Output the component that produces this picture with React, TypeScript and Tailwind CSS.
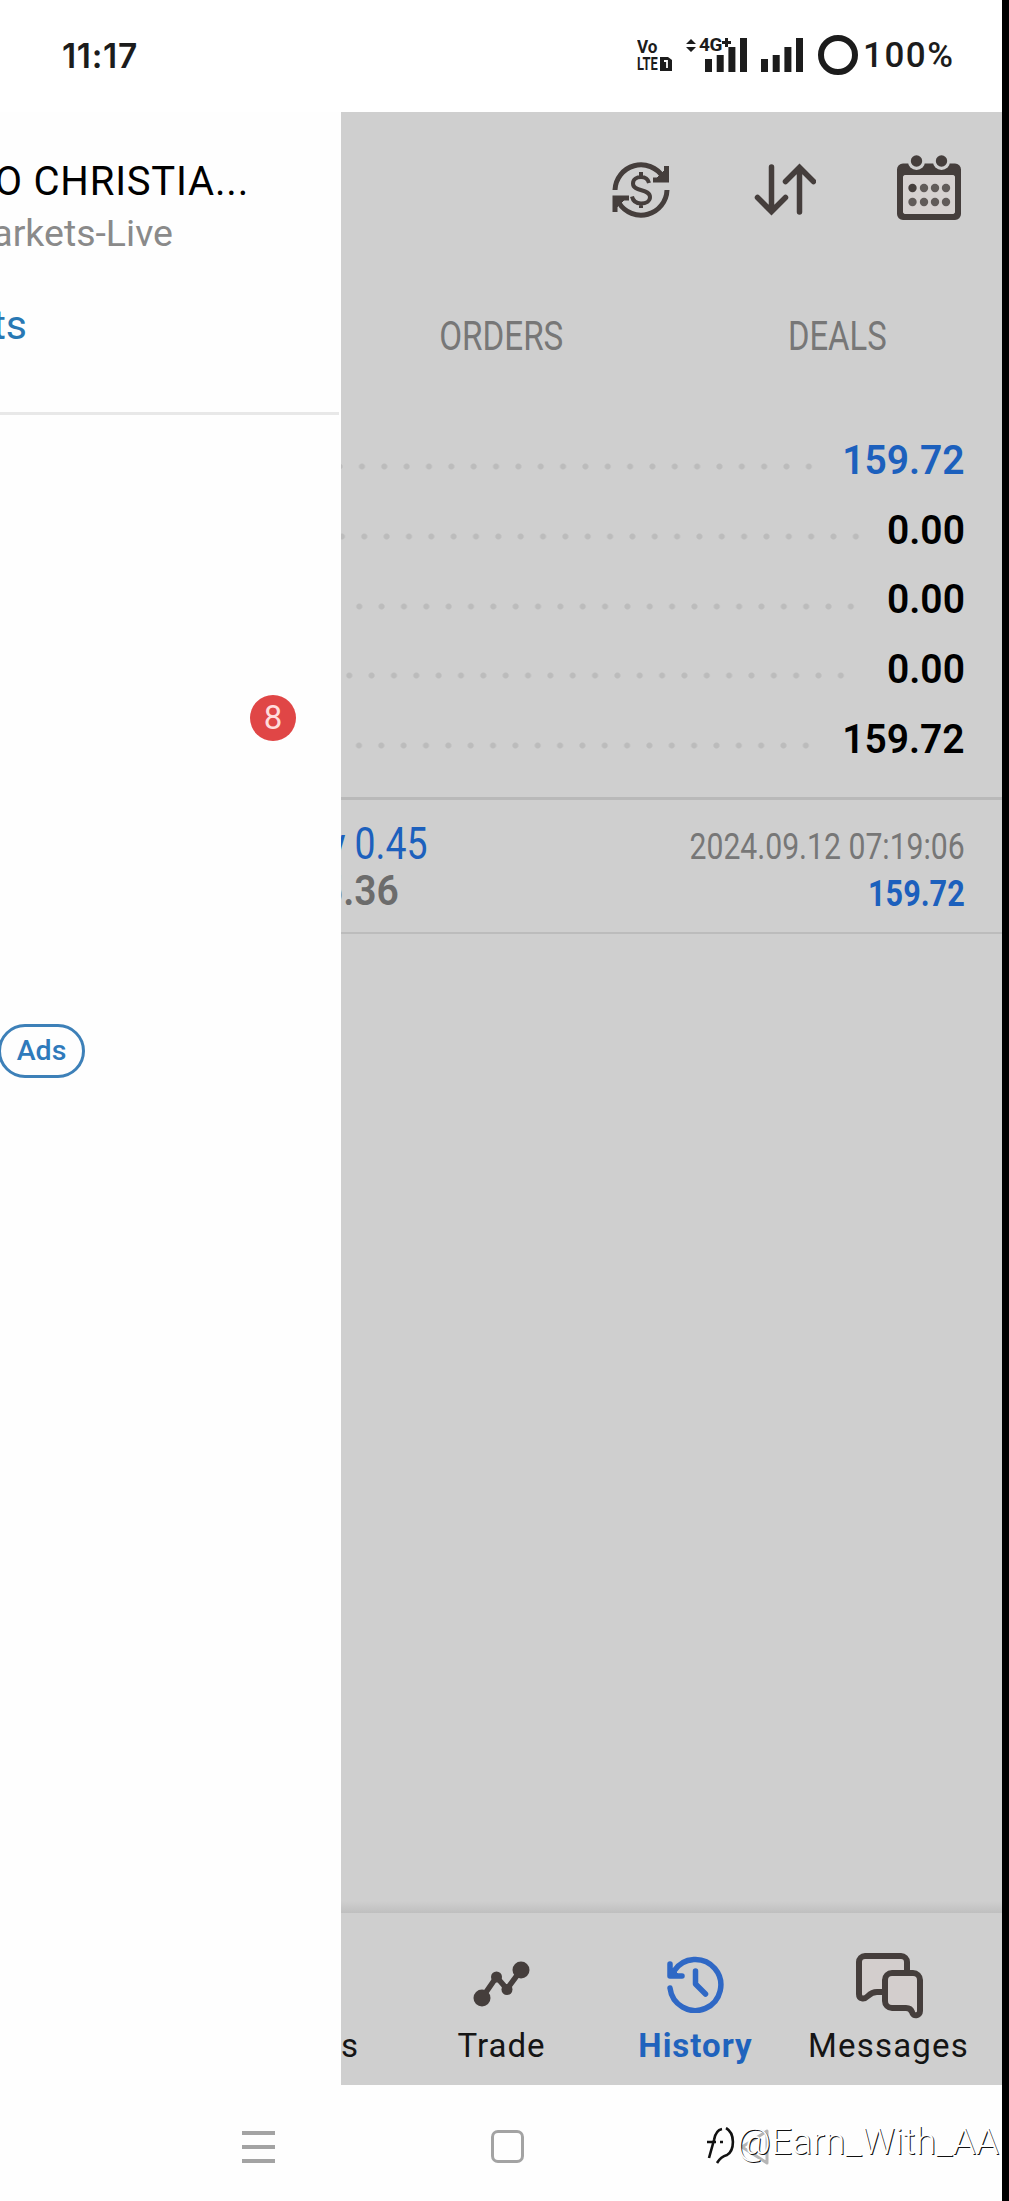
import clsx from 'clsx'

type SummaryRow = {
  value: string
  dots: string
  color: string
}

const summary: SummaryRow[] = [
  { value: '159.72', dots: 'w-[479px]', color: 'text-[#1c60bd]' },
  { value: '0.00', dots: 'w-[526px]', color: 'text-black' },
  { value: '0.00', dots: 'w-[521px]', color: 'text-black' },
  { value: '0.00', dots: 'w-[511px]', color: 'text-black' },
  { value: '159.72', dots: 'w-[476px]', color: 'text-black' },
]

function SignalBars() {
  return (
    <svg width="42" height="34" viewBox="0 0 42 34" fill="#1c1c1c">
      <rect x="0" y="21" width="7" height="13" />
      <rect x="11.7" y="17" width="7" height="17" />
      <rect x="23.4" y="9" width="7" height="25" />
      <rect x="35" y="0" width="7" height="34" />
    </svg>
  )
}

function StatusBar() {
  return (
    <header className="flex h-28 items-start bg-white text-[#1c1c1c]">
      <div className="mt-9 ml-[62px] w-[575px] shrink-0 font-[Inter] text-[33.5px] leading-10 font-semibold tracking-[.7px]">
        11:17
      </div>
      <div className="mt-[38px] w-[48px] shrink-0 font-[Roboto] text-[19px] leading-[17px] font-bold">
        <div className="origin-left scale-x-[.9]">Vo</div>
        <div className="flex items-center">
          <span className="w-[23px] origin-left scale-x-[.68]">LTE</span>
          <svg width="12" height="14" viewBox="0 0 12 14">
            <path d="M0 0h8l4 3v11H0z" fill="#1c1c1c" />
            <path d="M4 4h3v7" fill="none" stroke="#fff" strokeWidth="1.8" />
          </svg>
        </div>
      </div>
      <div className="relative mt-[38px] w-[76px] shrink-0 pl-5">
        <SignalBars />
        <div className="absolute top-0 left-0 flex items-start">
          <svg className="mt-px" width="12" height="13" viewBox="0 0 12 13" fill="#1c1c1c">
            <path d="M6 0l5 5H1zM6 13l5-5H1z" />
          </svg>
          <span className="ml-0.5 bg-white font-[Roboto] text-[19px] leading-[14px] font-bold tracking-tight">4G</span>
          <svg width="9" height="9" viewBox="0 0 9 9" fill="none" stroke="#1c1c1c" strokeWidth="3">
            <path d="M4.500 0v9M0 4.500h9" />
          </svg>
        </div>
      </div>
      <div className="mt-[38px] w-[57px] shrink-0">
        <SignalBars />
      </div>
      <div className="mt-[35px] size-[40px] shrink-0 rounded-full border-[6px] border-[#1c1c1c]" />
      <div className="mt-9 ml-[5px] font-[Roboto] text-[35px] leading-10 font-medium tracking-[1.5px]">100%</div>
    </header>
  )
}

function Drawer() {
  return (
    <aside className="flex w-[341px] shrink-0 flex-col overflow-hidden bg-[#fefefe] font-[Roboto]">
      <div className="flex h-[300px] flex-col items-start">
        <div className="mt-[46px] flex w-[249px] justify-end text-[40px] leading-[47px] tracking-[.8px] whitespace-nowrap text-black">
          O CHRISTIA...
        </div>
        <div className="mt-[4px] flex w-[173px] justify-end text-[37.500px] leading-[48px] whitespace-nowrap text-[#8a8a8a]">
          arkets-Live
        </div>
        <div className="mt-[44px] flex w-[27px] justify-end text-[41px] leading-[48px] text-[#2878b4]">ts</div>
      </div>
      <div className="h-[3px] w-[339px] bg-[#e8e8e8]" />
      <div className="mt-[280px] ml-[250px] flex size-[46px] items-center justify-center rounded-full bg-[#e04646] text-[33px] text-[#ffdcdc]">
        8
      </div>
      <div className="mt-[283px] flex h-[54px] w-[87px] -translate-x-[2px] items-center justify-center rounded-full border-[3px] border-[#3d80b8] text-[28.500px] font-medium text-[#2f7abb]">
        Ads
      </div>
    </aside>
  )
}

function Toolbar() {
  return (
    <div className="flex h-[138px] items-start text-[#453e3c]">
      <svg className="mt-[49px] ml-[271px]" width="58" height="58" viewBox="0 0 58 58" fill="none" stroke="currentColor" strokeWidth="5">
        <path d="M3 29A26 26 0 0 1 51 16M55 29A26 26 0 0 1 7 42" />
        <path d="M54.500 5v14H41M3 51V37h14" />
        <path d="M54 8v11H43zM3 48V37h11z" fill="currentColor" strokeWidth="1" />
        <path d="M37 22c-1-4-4-6-8-6s-8 2-8 6.500c0 9 17 4.500 17 13.500 0 4-4 6.500-9 6.500s-8-2.500-9-7M29 11v5M29 42v5" strokeWidth="4" />
      </svg>
      <svg className="mt-[51px] ml-[84px]" width="62" height="54" viewBox="0 0 62 54" fill="none" stroke="currentColor" strokeWidth="5.500" strokeLinecap="round">
        <path d="M17.500 4v44M3.500 34.500l14 14 14-14M45.500 49V5M31.500 18.500l14-14 14 14" />
      </svg>
      <svg className="mt-[43px] ml-[80px]" width="66" height="66" viewBox="0 0 66 66" fill="currentColor">
        <path fillRule="evenodd" d="M7 8.500h52a6 6 0 0 1 6 6V59a6 6 0 0 1-6 6H7a6 6 0 0 1-6-6V14.500a6 6 0 0 1 6-6zM10 20a3 3 0 0 0-3 3v33a3 3 0 0 0 3 3h46a3 3 0 0 0 3-3V23a3 3 0 0 0-3-3z" />
        <rect x="7" y="20" width="52" height="39" rx="3" fill="#d6d1d0" />
        <circle cx="20.500" cy="6.500" r="8.500" fill="#cfcfcf" />
        <circle cx="45.500" cy="6.500" r="8.500" fill="#cfcfcf" />
        <circle cx="20.500" cy="6" r="5.700" />
        <circle cx="45.500" cy="6" r="5.700" />
        <circle cx="16.500" cy="33" r="4.200" />
        <g opacity=".8">
          <circle cx="28" cy="33" r="4.200" />
          <circle cx="39" cy="33" r="4.200" />
          <circle cx="50" cy="33" r="4.200" />
          <circle cx="16.500" cy="47" r="4.200" />
          <circle cx="28" cy="47" r="4.200" />
          <circle cx="39" cy="47" r="4.200" />
          <circle cx="50" cy="47" r="4.200" />
        </g>
      </svg>
    </div>
  )
}

function Deal() {
  return (
    <div className="flex h-[132px] justify-between pt-5 pr-[37px] whitespace-nowrap">
      <div className="flex w-[87px] flex-col items-end">
        <div className="origin-right scale-x-[.85] text-[44px] leading-[48px] text-[#1c60bd]">y 0.45</div>
        <div className="mr-[29px] origin-right scale-x-[.93] text-[42px] leading-[46px] font-semibold text-[#6c6c6c]">
          5.36
        </div>
      </div>
      <div className="flex flex-col items-end">
        <div className="origin-right scale-x-[.815] text-[37px] leading-[53px] text-[#777]">2024.09.12 07:19:06</div>
        <div className="origin-right scale-x-[.85] text-[36px] leading-[42px] font-bold text-[#1c60bd]">159.72</div>
      </div>
    </div>
  )
}

function BottomNav() {
  return (
    <nav className="flex h-[172px] text-[33px] leading-10 tracking-[1px] text-[#151515]">
      <div className="flex w-[64px] flex-col pt-[113px]">
        <span>s</span>
      </div>
      <div className="flex w-[193px] flex-col items-center">
        <svg className="mt-[48px] mb-[19px]" width="58" height="46" viewBox="0 0 58 46" fill="#453e3c">
          <path d="M9 37L23.500 16 34 28 48 9" fill="none" stroke="#453e3c" strokeWidth="5.500" />
          <circle cx="9" cy="37" r="8.500" />
          <circle cx="23.500" cy="16" r="5.500" />
          <circle cx="34" cy="28.500" r="5.500" />
          <circle cx="48" cy="9" r="8.500" />
        </svg>
        Trade
      </div>
      <div className="flex w-[193px] flex-col items-center font-bold text-[#1f63bd]">
        <svg className="mt-[42px] mb-[13px]" width="58" height="58" viewBox="0 0 58 58" fill="none" stroke="#2f68c5" strokeWidth="5.500" strokeLinecap="round" strokeLinejoin="round">
          <path d="M8 16A25.500 25.500 0 1 1 4 33" />
          <path d="M4 9v12H16" />
          <path d="M4 11l10 10H4z" fill="#2f68c5" strokeWidth="1" />
          <path d="M29.500 16v13l10 10" />
        </svg>
        <span className="ml-0.5">History</span>
      </div>
      <div className="flex w-[195px] flex-col items-center">
        <svg className="mt-[39px] mb-[7px]" width="68" height="67" viewBox="0 0 68 67" fill="#d3cecd" stroke="#453e3c" strokeWidth="6" strokeLinejoin="round">
          <path d="M10 4h36a6 6 0 0 1 6 6v30H22c-4 0-6 1-9 4-4 4-9 3-9-2V10a6 6 0 0 1 6-6z" />
          <path d="M37 21h21a7 7 0 0 1 7 7v31c0 5-7 6-8 1-1-3-3-4-6-4H37a7 7 0 0 1-7-7V28a7 7 0 0 1 7-7z" />
        </svg>
        <span className="tracking-[1.2px]">Messages</span>
      </div>
    </nav>
  )
}

function SystemNav() {
  return (
    <footer className="flex h-[116px] items-start bg-[#fefefe]">
      <div className="mt-[46px] ml-[242px] flex w-[33px] shrink-0 flex-col gap-[10px]">
        <div className="h-1 bg-[#a3a3a3]" />
        <div className="h-1 bg-[#a3a3a3]" />
        <div className="h-1 bg-[#a3a3a3]" />
      </div>
      <div className="mt-[45px] ml-[216px] size-[33px] shrink-0 rounded-[7px] border-[3px] border-[#a3a3a3]" />
      <div className="relative mt-[34px] ml-[182px] flex shrink-0 items-start">
        <svg className="absolute top-[9px] left-[32px]" width="34" height="38" viewBox="0 0 34 38" fill="none" stroke="#b5b5b5" strokeWidth="3" strokeLinejoin="round">
          <path d="M29 3v32L4 19z" />
        </svg>
        <svg className="mt-[8px] shrink-0" width="31" height="38" viewBox="0 0 31 38" fill="none" stroke="#111" strokeWidth="2.600">
          <path d="M16 2C11 3 9 7 8 13L3 31M1 15h9M20 1c9 5 9 22 1 27-4 1-7 3-10 8M14 15h3" />
        </svg>
        <div className="relative font-[Roboto] text-[37px] leading-[46px] font-light tracking-[.2px] whitespace-nowrap text-white [text-shadow:1px_1px_0_#111]">
          @Earn_With_AA
        </div>
      </div>
    </footer>
  )
}

export default function App() {
  return (
    <div className="flex h-[2201px] w-[1009px] overflow-hidden bg-black">
      <div className="flex w-[1002px] flex-col bg-white">
        <StatusBar />
        <div className="flex h-[1973px]">
          <Drawer />
          <main className="flex w-[661px] flex-col overflow-hidden bg-[#cfcfcf] font-[Roboto]">
            <Toolbar />
            <div className="-ml-[7px] grid h-[171px] w-[669px] grid-cols-2 pt-[63px] text-center text-[40px] leading-[48px] text-[#777]">
              <div className="scale-x-[.83]">ORDERS</div>
              <div className="ml-0.5 scale-x-[.82]">DEALS</div>
            </div>
            <div className="flex h-[376px] flex-col pt-[5px]">
              {summary.map((row, i) => (
                <div key={i} className="flex h-[69.700px] items-center justify-between pr-[37px]">
                  <div
                    className={clsx(
                      'mt-3 h-[7px] bg-[radial-gradient(circle,#bcbcbc_2.5px,transparent_3.5px)] bg-[length:22.350px_7px] bg-right bg-repeat-x',
                      row.dots,
                    )}
                  />
                  <div className={clsx('origin-right scale-x-[.975] text-[40px] leading-[48px] font-semibold', row.color)}>
                    {row.value}
                  </div>
                </div>
              ))}
            </div>
            <div className="h-[3px] bg-[#b9b9b9]" />
            <Deal />
            <div className="h-[2px] bg-[#bcbcbc]" />
            <div className="flex-1" />
            <div className="h-3 bg-linear-to-b from-[#cfcfcf] to-[#bfbfbf]" />
            <BottomNav />
          </main>
        </div>
        <SystemNav />
      </div>
    </div>
  )
}
